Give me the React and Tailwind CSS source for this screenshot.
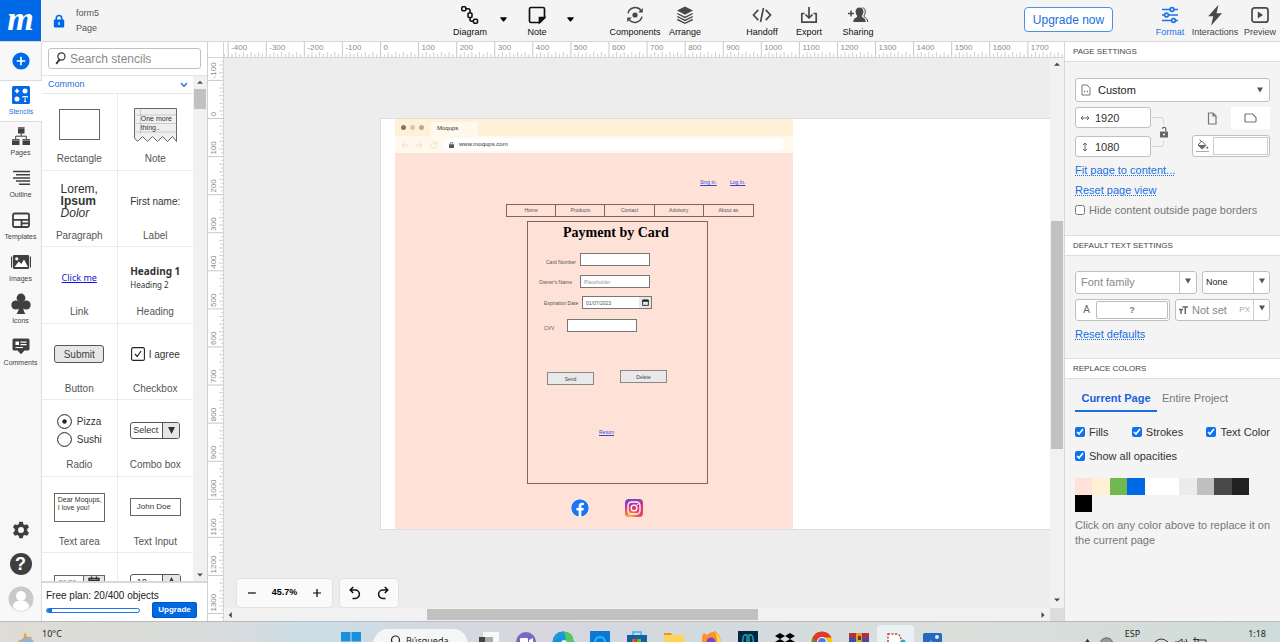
import React, { useLayoutEffect, useRef, useState } from "react";
import { FaFacebook } from "react-icons/fa";

const SCALE = 0.3808;

function range(from, to, step) {
  const out = [];
  for (let v = from; v <= to; v += step) out.push(v);
  return out;
}

/* ---------- rulers ---------- */

function useSize() {
  const ref = useRef(null);
  const [size, setSize] = useState({ width: 0, height: 0 });
  useLayoutEffect(() => {
    const measure = () => {
      const r = ref.current.getBoundingClientRect();
      setSize({ width: r.width, height: r.height });
    };
    measure();
    window.addEventListener("resize", measure);
    return () => window.removeEventListener("resize", measure);
  }, []);
  return [ref, size];
}

function HorizontalRuler() {
  const [ref, { width }] = useSize();
  const x = (v) => 156.5 + v * SCALE;
  const last = Math.floor((width - 156.5) / SCALE);
  return (
    <svg ref={ref} className="block h-full w-full" aria-hidden="true">
      {range(-410, last, 10).map((v) => (
        <line key={v} x1={x(v)} x2={x(v)} y1={v % 100 === 0 ? 0 : v % 20 === 0 ? 10 : 12} y2="16"
          stroke={v % 100 === 0 ? "#c8c8c8" : "#c4c4c4"} strokeWidth={v % 100 === 0 ? 1 : 0.8} />
      ))}
      {range(-400, last - 50, 100).map((v) => (
        <text key={v} x={x(v) + 3} y="8" fontSize="8" fill="#8c8c8c">{v}</text>
      ))}
    </svg>
  );
}

function VerticalRuler() {
  const [ref, { height }] = useSize();
  const y = (v) => 60.5 + v * SCALE;
  const last = Math.floor((height - 60.5) / SCALE);
  return (
    <svg ref={ref} className="block h-full w-full" aria-hidden="true">
      {range(-150, last, 10).map((v) => (
        <line key={v} y1={y(v)} y2={y(v)} x1={v % 100 === 0 ? 0 : v % 20 === 0 ? 11 : 13} x2="16"
          stroke={v % 100 === 0 ? "#c8c8c8" : "#c4c4c4"} strokeWidth={v % 100 === 0 ? 1 : 0.8} />
      ))}
      {range(-100, last, 100).map((v) => (
        <text key={v} transform={`translate(8 ${y(v) - 2}) rotate(-90)`} fontSize="8" fill="#8c8c8c">{v}</text>
      ))}
    </svg>
  );
}

function Arrow({ dir, className = "" }) {
  const d = { up: "M0 5 4 1 8 5z", down: "M0 2 4 6 8 2z", left: "M5 0 1 4 5 8z", right: "M2 0 6 4 2 8z" }[dir];
  return (
    <svg viewBox="0 0 8 8" className={`size-[6px] shrink-0 ${className}`} aria-hidden="true">
      <path d={d} fill="currentColor" />
    </svg>
  );
}

/* ---------- header icons ---------- */

const DiagramIcon = () => (
  <svg viewBox="0 0 20 20" className="size-5" fill="none" stroke="#111" strokeWidth="1.6">
    <rect x="1.8" y="1.800" width="4" height="4" rx="1" />
    <rect x="8" y="8" width="4" height="4.500" rx="1" />
    <rect x="13.500" y="14.200" width="4" height="4" rx="1" />
    <path d="M5.800 3.800h2.400q1.800 0 1.800 1.800V8M10 12.500v2q0 1.700 1.800 1.700h1.700" />
  </svg>
);
const NoteIcon = () => (
  <svg viewBox="0 0 20 20" className="size-5" fill="none" stroke="#111" strokeWidth="1.7">
    <path d="M4 2.500h12q1.500 0 1.500 1.500v9l-4.700 4.500H4q-1.500 0-1.500-1.500V4Q2.500 2.500 4 2.500z" />
    <path d="M12.500 17.500V12.500h5z" fill="#111" />
  </svg>
);
const ComponentsIcon = () => (
  <svg viewBox="0 0 20 20" className="size-5" fill="none" stroke="#484848" strokeWidth="1.5">
    <path d="M3 8.300a7.300 7.300 0 0 1 13-2.700M17 11.700a7.300 7.300 0 0 1-13 2.700" />
    <path d="M17.800 3v4.600h-4.700zM2.200 17v-4.600h4.700z" fill="#484848" stroke="none" />
    <circle cx="10" cy="10" r="2.600" fill="#484848" stroke="none" />
  </svg>
);
const ArrangeIcon = () => (
  <svg viewBox="0 0 20 20" className="size-5" fill="none" stroke="#484848" strokeWidth="1.500">
    <path d="M10 1.500 18 5.500l-8 4.200-8-4.200z" fill="#484848" stroke="none" />
    <path d="m2.300 8.500 7.700 3.900 7.700-3.900M2.300 11.500l7.700 3.900 7.700-3.900M2.300 14.500l7.700 3.800 7.700-3.800" strokeWidth="1.400" />
  </svg>
);
const HandoffIcon = () => (
  <svg viewBox="0 0 20 20" className="size-5" fill="none" stroke="#484848" strokeWidth="1.700">
    <path d="M6.300 4.800 1.500 10l4.800 5.200M13.700 4.800l4.800 5.200-4.800 5.200M11.500 3 8.500 17" />
  </svg>
);
const ExportIcon = () => (
  <svg viewBox="0 0 20 20" className="size-5" fill="none" stroke="#484848" strokeWidth="1.700">
    <path d="M5.500 8.500H2.800v8.700h14.400V8.500H14.500M10 2v10.500M6.500 9.500 10 13l3.500-3.500" strokeLinejoin="round" />
  </svg>
);
const SharingIcon = () => (
  <svg viewBox="0 0 22 20" className="h-5 w-[22px]" fill="#484848">
    <path d="M1 7.800h6v1.500H1zM3.300 5.500h1.500v6H3.300z" />
    <path d="M12.500 2.500c2.500 0 3.900 1.700 3.900 4.200 0 1.800-.7 3-1.500 3.900v1.500c1.500 1 3.600 1.500 3.800 4.900H6.300c.2-3.400 2.300-3.900 3.800-4.900v-1.500c-.8-.9-1.500-2.100-1.500-3.900 0-2.500 1.400-4.200 3.900-4.200z" />
    <path d="M15.500 2.700c2 .3 2.800 2 2.800 4 0 1.600-.5 2.700-1.200 3.600v1.500c1.600 1.200 3.400 1.900 3.700 5.200" fill="none" stroke="#484848" strokeWidth="1" />
  </svg>
);
const FormatIcon = () => (
  <svg viewBox="0 0 20 20" className="size-5" fill="#f4f4f4" stroke="#1a73e8" strokeWidth="1.600">
    <path d="M2 4.500h16M2 10h16M2 15.500h16" />
    <circle cx="12" cy="4.500" r="1.900" /><circle cx="6.500" cy="10" r="1.900" /><circle cx="13.500" cy="15.500" r="1.900" />
  </svg>
);
const BoltIcon = () => (
  <svg viewBox="0 0 20 22" className="h-[22px] w-5" fill="#484848">
    <path d="M13.500 .8 3.200 12.300h5L6.200 21.500 17 9.300h-5.500z" />
  </svg>
);
const PreviewIcon = () => (
  <svg viewBox="0 0 20 20" className="size-5" fill="none" stroke="#484848" strokeWidth="1.700">
    <rect x="2" y="2.800" width="16" height="14.400" rx="2.500" />
    <path d="M7.800 6.500 13 10l-5.200 3.500z" fill="#484848" stroke="none" />
  </svg>
);

function ToolButton({ icon, label, active, muted, wide }) {
  return (
    <button className={`flex h-[41px] shrink-0 flex-col items-center whitespace-nowrap pt-1 text-[9px] leading-[12px] ${wide ? "w-[50px]" : "w-10"} ${active ? "text-[#1a73e8]" : muted ? "text-[#444]" : "text-[#111]"}`}>
      <span className="flex h-[22px] items-center">{icon}</span>
      <span>{label}</span>
    </button>
  );
}

function Caret({ label }) {
  return (
    <button aria-label={label} className="flex h-[38px] w-4 shrink-0 items-center justify-center text-black">
      <svg viewBox="0 0 8 5" className="h-[5px] w-[7px]"><path d="M.5 0h7q.5.500 0 1L4.500 4.700q-.5.400-1 0L.5 1Q0 .5.500 0z" fill="currentColor" /></svg>
    </button>
  );
}

function Header() {
  return (
    <header className="flex h-[42px] shrink-0 border-b border-[#d6d6d6] bg-[#f4f4f4]">
      <div className="flex w-[450px] shrink-0 items-center">
        <a href="#home" aria-label="Moqups" className="flex size-[41px] shrink-0 items-center justify-center bg-[#0069e8] pb-1 font-['Liberation_Serif',serif] text-[34px] leading-[37px] font-bold text-white italic">
          m
        </a>
        <svg viewBox="0 0 12 14" className="ml-3 h-[14px] w-3" aria-hidden="true">
          <path d="M3.300 6V4.200a2.700 2.700 0 0 1 5.400 0V6" fill="none" stroke="#0069e8" strokeWidth="1.600" />
          <rect x=".8" y="5.600" width="10.400" height="7.800" rx="1" fill="#0069e8" />
          <path d="M6 8v3" stroke="#f4f4f4" strokeWidth="1.300" />
        </svg>
        <div className="ml-[11px] text-[9px] leading-[15px] text-[#555]">
          <div>form5</div>
          <div>Page</div>
        </div>
      </div>
      <nav className="flex shrink-0">
        <ToolButton icon={<DiagramIcon />} label="Diagram" />
        <span className="w-[5px]" />
        <Caret label="Diagram options" />
        <span className="w-[6px]" />
        <ToolButton icon={<NoteIcon />} label="Note" />
        <span className="w-[5px]" />
        <Caret label="Note options" />
        <span className="w-8" />
        <ToolButton icon={<ComponentsIcon />} label="Components" wide />
        <span className="w-[5px]" />
        <ToolButton icon={<ArrangeIcon />} label="Arrange" />
        <span className="w-[37px]" />
        <ToolButton icon={<HandoffIcon />} label="Handoff" />
        <span className="w-[7px]" />
        <ToolButton icon={<ExportIcon />} label="Export" />
        <span className="w-[9px]" />
        <ToolButton icon={<SharingIcon />} label="Sharing" />
      </nav>
      <div className="ml-auto flex shrink-0">
        <button className="mt-[7px] mr-[37px] h-[25px] w-[89px] rounded border border-[#4a90e8] bg-white text-xs whitespace-nowrap text-[#1a6fe0]">Upgrade now</button>
        <ToolButton icon={<FormatIcon />} label="Format" active />
        <ToolButton icon={<BoltIcon />} label="Interactions" muted wide />
        <ToolButton icon={<PreviewIcon />} label="Preview" muted />
      </div>
    </header>
  );
}

/* ---------- left rail ---------- */

const rail = [
  ["Stencils", (
    <svg viewBox="0 0 20 20" className="size-5"><rect x="1" y="1" width="18" height="18" rx="1.500" fill="#0069e8" />
      <path d="M6 3.800v4.400M3.800 6h4.400" stroke="#fff" strokeWidth="1.600" /><circle cx="14" cy="6" r="2.500" fill="#fff" /><circle cx="6" cy="14" r="2.500" fill="#fff" />
      <path d="M11.800 12.800v-1.300h4.600v1.300M14.100 11.500v5M13 16.500h2.200" fill="none" stroke="#fff" strokeWidth="1" /></svg>
  )],
  ["Pages", (
    <svg viewBox="0 0 20 20" className="size-5" fill="#3f3f3f"><path d="M7 1h6.500v6.500H7zM1 13h7.500v6H1zM11.500 13H19v6h-7.500z" /><path d="M10.200 7v3M4.700 13v-2.800h10.600V13" fill="none" stroke="#3f3f3f" strokeWidth="1" /><path d="M7 2h6.500M1 14.200h7.500M11.500 14.200H19" stroke="#fff" strokeWidth=".500" /></svg>
  )],
  ["Outline", (
    <svg viewBox="0 0 20 20" className="size-5" stroke="#3f3f3f" strokeWidth="1.500"><path d="M2 3.500h17M5 6.700h14M2 9.900h17M5 13.100h14M8 16.300h11" /></svg>
  )],
  ["Templates", (
    <svg viewBox="0 0 20 20" className="size-5" fill="none" stroke="#3f3f3f" strokeWidth="1.800"><rect x="2" y="3.500" width="16" height="13.500" rx="1.500" /><path d="M2 9.800h16M10.500 10v7M10.500 13.400H18" /></svg>
  )],
  ["Images", (
    <svg viewBox="0 0 22 20" className="h-5 w-[22px]" fill="#3f3f3f"><path d="M4 3h14q1 0 1 1v12q0 1-1 1H4q-1 0-1-1V4q0-1 1-1zM1 4.500h1.200v11H1zM19.800 4.500H21v11h-1.200z" /><path d="m4.500 15 4.300-5.500 2.500 2.500L14 7.500l4 7.500z" fill="#fff" /><circle cx="6.800" cy="6.800" r="1.600" fill="#fff" /></svg>
  )],
  ["Icons", (
    <svg viewBox="0 0 20 22" className="h-[22px] w-5" fill="#3f3f3f"><circle cx="10" cy="5" r="4.400" /><circle cx="4.800" cy="12" r="4.500" /><circle cx="15.200" cy="12" r="4.500" /><path d="M8 7h4v6c.3 4 1 6 2.500 8h-9C7 19 7.700 17 8 13z" /></svg>
  )],
  ["Comments", (
    <svg viewBox="0 0 20 20" className="size-5" fill="#3f3f3f"><path d="M3 2.500h14q1.500 0 1.500 1.500v9q0 1.500-1.500 1.500h-3.500L10 18.200l-3.500-3.700H3Q1.500 14.500 1.500 13V4Q1.500 2.500 3 2.500z" /><path d="M4.500 5.500h3.500V9H4.500z" fill="#fff" /><path d="M9.500 6.200h6M9.500 8.600h6M4.500 11.500H12" stroke="#fff" strokeWidth="1.200" /></svg>
  )],
];

function Rail() {
  return (
    <nav className="flex w-[42px] shrink-0 flex-col border-r border-[#dcdcdc] bg-[#f8f8f8]">
      <button aria-label="Add" className="flex h-[38px] shrink-0 items-center justify-center">
        <svg viewBox="0 0 18 18" className="size-[18px]"><circle cx="9" cy="9" r="8.600" fill="#0069e8" /><path d="M9 4.700v8.600M4.700 9h8.600" stroke="#fff" strokeWidth="1.600" /></svg>
      </button>
      {rail.map(([label, icon]) => (
        <button key={label} className={`flex h-[42px] shrink-0 flex-col items-center pt-[3px] text-[7px] leading-[10px] ${label === "Stencils" ? "-mr-px border-y border-[#dcdcdc] bg-white text-[#1a6fe0]" : "text-[#444]"}`}>
          <span className="flex h-[22px] items-center">{icon}</span>
          <span className="mt-px">{label}</span>
        </button>
      ))}
      <div className="mt-auto flex flex-col items-center">
        <button aria-label="Settings" className="flex h-[34px] items-center">
          <svg viewBox="0 0 20 20" className="size-[18px]" fill="#3f3f3f"><path fillRule="evenodd" d="M8 .8h4l.6 2.700 1.700 1 2.600-.9 2 3.400-2 1.900v2.200l2 1.900-2 3.400-2.600-.9-1.700 1-.6 2.700H8l-.6-2.700-1.700-1-2.600.9-2-3.400 2-1.900V8.900l-2-1.900 2-3.400 2.600.9 1.700-1zM10 6.700a3.300 3.300 0 1 0 0 6.600 3.300 3.300 0 0 0 0-6.600z" /></svg>
        </button>
        <button aria-label="Help" className="flex h-[34px] items-center">
          <span className="flex size-[22px] items-center justify-center rounded-full bg-[#3f3f3f] text-lg leading-[22px] font-bold text-white">?</span>
        </button>
        <button aria-label="Account" className="flex h-10 items-start pt-[5px]">
          <svg viewBox="0 0 26 26" className="size-[26px]"><circle cx="13" cy="13" r="12.500" fill="#c9c9c9" /><circle cx="13" cy="10" r="5" fill="#fff" /><path d="M4.500 20.500c1-4 4-6 8.500-6s7.500 2 8.500 6q-3.500 4.500-8.500 4.500t-8.500-4.500z" fill="#fff" /></svg>
        </button>
      </div>
    </nav>
  );
}

/* ---------- stencils ---------- */

const previews = [
  ["Rectangle", <div className="h-[31px] w-[41px] border border-[#666]" />],
  ["Note", (
    <div className="relative h-[34px] w-[43px]">
      <svg viewBox="0 0 43 34" className="h-full w-full" fill="#efefef" stroke="#666" strokeWidth="1"><path d="M.5.500h42v33l-4-5-5 5-5-5-5 5-5-5-5 5-5-5-5 5-3-3.500z" /><path d="M.5 7h42M.5 15.500h42M.5 24h42M6.500.500V26" stroke="#bbb" strokeWidth=".700" /></svg>
      <div className="absolute top-[6px] left-[7px] text-[7px] leading-[9px] whitespace-nowrap text-[#333]">One more<br />thing..</div>
    </div>
  )],
  ["Paragraph", <div className="text-[12px] leading-[12px] text-[#333]">Lorem,<br /><b>Ipsum</b><br /><i>Dolor</i></div>],
  ["Label", <div className="text-[10px] text-[#333]">First name:</div>],
  ["Link", <a href="#link" className="font-['Noto_Sans',sans-serif] text-[9px] text-[#1414d8] underline">Click me</a>],
  ["Heading", <div className="font-['Noto_Sans',sans-serif] text-[#333]"><div className="text-[10px] leading-[14px] font-bold">Heading 1</div><div className="text-[8px] leading-[14px]">Heading 2</div></div>],
  ["Button", <div className="flex h-[18px] w-[50px] items-center justify-center rounded-[3px] border border-[#555] bg-[#e6e6e6] text-[10px] text-[#444]">Submit</div>],
  ["Checkbox", (
    <div className="flex items-center gap-1 text-[10px] text-[#333]">
      <svg viewBox="0 0 14 14" className="size-[14px]" fill="none" stroke="#222"><rect x=".6" y=".6" width="12.800" height="12.800" rx="1.500" strokeWidth="1.100" /><path d="m4 7 2.200 2.500L10 4" strokeWidth="1.200" /></svg>I agree
    </div>
  )],
  ["Radio", (
    <div className="flex flex-col gap-[3px] text-[10px] leading-[15px] text-[#333]">
      <div className="flex items-center gap-[5px]"><svg viewBox="0 0 15 15" className="size-[15px]"><circle cx="7.500" cy="7.500" r="6.900" fill="none" stroke="#222" /><circle cx="7.500" cy="7.500" r="2.200" fill="#222" /></svg>Pizza</div>
      <div className="flex items-center gap-[5px]"><svg viewBox="0 0 15 15" className="size-[15px]"><circle cx="7.500" cy="7.500" r="6.900" fill="none" stroke="#222" /></svg>Sushi</div>
    </div>
  )],
  ["Combo box", (
    <div className="flex h-[17px] w-[50px] rounded-[3px] border border-[#555] text-[9px] leading-[15px] text-[#333]">
      <span className="w-[31px] pl-0.5">Select</span>
      <span className="flex flex-1 items-center justify-center rounded-r-[2px] border-l border-[#555] bg-[#e6e6e6]"><svg viewBox="0 0 7 7" className="size-[7px]"><path d="M0 0h7L3.500 7z" fill="#333" /></svg></span>
    </div>
  )],
  ["Text area", <div className="h-[29px] w-[51px] border border-[#666] pt-0.5 pl-[3px] text-[7px] leading-[8px] whitespace-nowrap text-[#333]">Dear Moqups,<br />I love you!</div>],
  ["Text Input", <div className="h-[18px] w-[51px] border border-[#666] pl-[6px] text-[8px] leading-[16px] text-[#333]">John Doe</div>],
  ["Date", (
    <div className="flex h-[18px] w-[51px] border border-[#666] text-[7px] leading-[14px] text-[#666]">
      <span className="w-7 pl-1">01/09</span>
      <span className="flex flex-1 items-start justify-center border-l border-[#666] bg-[#e6e6e6]"><svg viewBox="0 0 12 12" className="size-3" fill="none" stroke="#333"><path d="M1 2.500h10v9H1zM3.500.500v3M8.500.500v3M1 4.500h10" strokeWidth="1.500" /></svg></span>
    </div>
  )],
  ["Stepper", (
    <div className="flex h-[20px] w-[51px] rounded-[3px] border border-[#555] text-[9px] leading-[15px] text-[#333]">
      <span className="w-[31px] pl-[6px]">10</span>
      <span className="flex flex-1 justify-center border-l border-[#555] bg-[#e6e6e6] pt-0.5"><svg viewBox="0 0 6 6" className="size-[5px]"><path d="M0 6h6L3 0z" fill="#333" /></svg></span>
    </div>
  )],
];

function Stencils() {
  return (
    <aside className="flex w-[166px] shrink-0 flex-col border-r border-[#d0d0d0] bg-white">
      <div className="shrink-0 px-[6px] pt-[6px] pb-[6px]">
        <label className="flex h-[21px] items-center rounded-[3px] border border-[#c0c0c0] pl-[6px]">
          <svg viewBox="0 0 12 14" className="h-[13px] w-[11px] shrink-0" fill="none" stroke="#333"><circle cx="7" cy="4.800" r="3.900" strokeWidth="1.300" /><path d="M5 8.300 1.300 12.800" strokeWidth="2" /></svg>
          <input type="text" aria-label="Search stencils" placeholder="Search stencils" className="ml-1 h-full w-full min-w-0 bg-transparent text-xs outline-none placeholder:text-[#8a8a8a]" />
        </label>
      </div>
      <div className="flex min-h-0 flex-1 border-t border-[#e4e4e4]">
        <div className="min-w-0 flex-1 overflow-hidden">
          <button className="flex h-[18px] w-full items-center justify-between border-b border-[#e8e8e8] pr-[5px] pl-[6px] text-[9px] text-[#1a6fe0]">
            Common
            <svg viewBox="0 0 8 6" className="h-[6px] w-2" fill="none" stroke="currentColor" strokeWidth="1.300"><path d="m1 1 3 3.200L7 1" /></svg>
          </button>
          <div className="grid h-[536px] grid-cols-2 grid-rows-7">
            {previews.map(([label, node], i) => (
              <figure key={label} className={`flex min-h-0 flex-col items-center border-b border-[#ebebeb] ${i % 2 === 0 ? "border-r" : ""}`}>
                <div className="flex h-[61px] w-full shrink-0 items-center justify-center">{node}</div>
                <figcaption className="-mt-[2px] text-[10px] leading-[12px] text-[#555]">{label}</figcaption>
              </figure>
            ))}
          </div>
        </div>
        <div className="flex w-[14px] shrink-0 flex-col items-center bg-[#f1f1f1] py-1 text-[#555]">
          <Arrow dir="up" />
          <div className="mt-[3px] h-5 w-3 bg-[#c1c1c1]" />
          <Arrow dir="down" className="mt-auto -mb-px" />
        </div>
      </div>
      <div className="h-10 shrink-0 border-t-2 border-[#d8d8d8] px-1 pt-[6px]">
        <div className="text-[10px] leading-[13px] text-[#222]">Free plan: 20/400 objects</div>
        <div className="flex items-center justify-between pr-[6px]">
          <div className="h-[5px] w-[94px] overflow-hidden rounded-full border border-[#1a73e8]"><div className="h-full w-[5%] bg-[#1a73e8]" /></div>
          <button className="h-4 w-[45px] rounded-[2px] border border-[#0058c8] bg-[#0069e0] text-[8px] leading-[12px] font-bold text-white">Upgrade</button>
        </div>
      </div>
    </aside>
  );
}

/* ---------- canvas: items are placed freely on the page ---------- */

function Mockup() {
  const label = "absolute text-[5px] leading-[8px] whitespace-nowrap text-[#555]";
  const field = "absolute h-[13px] w-[70px] border border-[#777] bg-white px-[3px] text-[5px] leading-[8px] text-[#555] placeholder:text-[#999]";
  const link = "absolute text-[5px] leading-[8px] whitespace-nowrap text-[#3344dd] underline";
  return (
    <div className="absolute top-[60px] left-[156px] h-[412px] w-[731px] border border-[#dedede] bg-white">
      <div className="absolute top-0 left-[14px] h-[410px] w-[398px] bg-[#fee2d8]">
        <div className="flex h-[17px] items-center bg-[#fff0d8]">
          <div className="flex w-[35px] shrink-0 gap-1 pl-[6px]">
            <span className="size-[5px] rounded-full bg-[#857560]" />
            <span className="size-[5px] rounded-full bg-[#d8c8b0]" />
            <span className="size-[5px] rounded-full bg-[#b8aa95]" />
          </div>
          <div className="mt-[3px] h-[14px] w-12 rounded-t-[2px] bg-[#fff8ec] pl-[7px] text-[6px] leading-[13px] text-[#333]">Moqups</div>
        </div>
        <div className="flex h-[17px] items-center bg-[#fff8ec] pr-2 pl-[6px]">
          <svg viewBox="0 0 38 8" className="h-2 w-[38px]" fill="none" stroke="#f6dcc8" strokeWidth="1"><path d="M7 4H1m2.500-2.500L1 4l2.500 2.500M15 4h6m-2.500-2.500L21 4l-2.500 2.500M35.500 3a3 3 0 1 0 .3 2M36 .8V3h-2.200" /></svg>
          <div className="ml-1 flex h-[13px] flex-1 items-center gap-[5px] rounded-full bg-white pl-[6px] text-[6px] text-[#333]">
            <svg viewBox="0 0 5 6" className="h-[6px] w-[5px]"><rect y="2.300" width="5" height="3.700" fill="#555" /><path d="M1.200 2.500V1.600a1.300 1.300 0 0 1 2.600 0v.9" fill="none" stroke="#555" strokeWidth=".800" /></svg>
            www.moqups.com
          </div>
        </div>
        <a href="#signin" className={`${link} top-[59px] left-[305px]`}>Sing in.</a>
        <a href="#login" className={`${link} top-[59px] left-[335px]`}>Log In.</a>
        <nav className="absolute top-[85px] left-[111px] grid h-[13px] w-[248px] grid-cols-5 divide-x divide-[#80655c] border border-[#80655c] text-center text-[5px] leading-[11px] text-[#555]">
          {["Home", "Products", "Contact", "Advisory", "About as"].map((t) => <a key={t} href="#nav">{t}</a>)}
        </nav>
        <div className="absolute top-[102px] left-[132px] h-[263px] w-[181px] border border-[#80655c]" />
        <h1 className="absolute top-[105px] left-[168px] font-['Liberation_Serif',serif] text-[14px] leading-[18px] font-bold whitespace-nowrap text-black">Payment by Card</h1>
        <label htmlFor="card" className={`${label} top-[139px] left-[151px]`}>Card Number</label>
        <input id="card" className={`${field} top-[134px] left-[185px]`} />
        <label htmlFor="owner" className={`${label} top-[159px] left-[144px]`}>Owner's Name</label>
        <input id="owner" placeholder="Placeholder" className={`${field} top-[156px] left-[185px]`} />
        <label htmlFor="expiry" className={`${label} top-[180px] left-[149px]`}>Expiration Date</label>
        <input id="expiry" defaultValue="01/07/2023" className={`${field} top-[177px] left-[187px]`} />
        <div className="absolute top-[178px] left-[244px] flex h-[11px] w-3 items-center justify-center bg-[#e8e8e8]">
          <svg viewBox="0 0 8 8" className="size-[7px]"><path d="M.7 1.300h6.600v6H.7z" fill="none" stroke="#222" strokeWidth="1" /><path d="M.5 1h7v2h-7zM2 0h1v1H2zM5 0h1v1H5z" fill="#222" /></svg>
        </div>
        <label htmlFor="cvv" className={`${label} top-[205px] left-[149px]`}>CVV</label>
        <input id="cvv" className={`${field} top-[200px] left-[172px]`} />
        <button className="absolute top-[253px] left-[152px] h-[13px] w-[47px] border border-[#888] bg-[#e9e9e9] text-[5px] leading-[8px] text-[#444]">Send</button>
        <button className="absolute top-[251px] left-[225px] h-[13px] w-[47px] border border-[#888] bg-[#e9e9e9] text-[5px] leading-[8px] text-[#444]">Delete</button>
        <a href="#return" className={`${link} top-[309px] left-[204px]`}>Return</a>
        <FaFacebook className="absolute top-[380px] left-[176px] size-[18px] rounded-full bg-white text-[#1877f2]" />
        <svg viewBox="0 0 18 18" className="absolute top-[380px] left-[230px] size-[18px]">
          <defs>
            <linearGradient id="ig" x1="0" y1="0" x2=".3" y2="1"><stop offset="0" stopColor="#5b4fd0" /><stop offset=".45" stopColor="#c9309a" /><stop offset="1" stopColor="#e8405a" /></linearGradient>
            <radialGradient id="ig2" cx=".25" cy="1.050" r=".750"><stop offset="0" stopColor="#ffd060" /><stop offset=".4" stopColor="#fb8040" stopOpacity=".9" /><stop offset="1" stopColor="#e8405a" stopOpacity="0" /></radialGradient>
          </defs>
          <rect width="18" height="18" rx="4" fill="url(#ig)" /><rect width="18" height="18" rx="4" fill="url(#ig2)" />
          <rect x="3" y="3" width="12" height="12" rx="3.500" fill="none" stroke="#fff" strokeWidth="1.300" /><circle cx="9" cy="9" r="2.900" fill="none" stroke="#fff" strokeWidth="1.300" /><circle cx="12.500" cy="5.500" r=".8" fill="#fff" />
        </svg>
      </div>
    </div>
  );
}

function Workspace() {
  return (
    <main className="flex min-w-0 flex-1 flex-col bg-[#ededed]">
      <div className="flex h-4 shrink-0 border-b border-[#d4d4d4] bg-white">
        <div className="w-4 shrink-0 border-r border-[#d4d4d4]" />
        <div className="min-w-0 flex-1 overflow-hidden"><HorizontalRuler /></div>
      </div>
      <div className="flex min-h-0 flex-1">
        <div className="w-4 shrink-0 overflow-hidden border-r border-[#d4d4d4] bg-white"><VerticalRuler /></div>
        <div className="flex min-w-0 flex-1 flex-col">
          <div className="flex min-h-0 flex-1">
            <div className="relative min-w-0 flex-1 overflow-hidden">
              <Mockup />
              <div className="absolute bottom-0 left-3 flex gap-[6px] text-black">
                <div className="flex h-[30px] w-[97px] items-center justify-between rounded border border-[#e2e2e2] bg-[#fafafa] px-[11px] text-[9px] font-bold">
                  <button aria-label="Zoom out"><svg viewBox="0 0 8 8" className="size-2"><path d="M0 4h8" stroke="#000" strokeWidth="1.200" /></svg></button>
                  <span>45.7%</span>
                  <button aria-label="Zoom in"><svg viewBox="0 0 8 8" className="size-2"><path d="M0 4h8M4 0v8" stroke="#000" strokeWidth="1.200" /></svg></button>
                </div>
                <div className="flex h-[30px] w-[60px] items-center justify-between rounded border border-[#e2e2e2] bg-[#fafafa] px-2">
                  <button aria-label="Undo"><svg viewBox="0 0 13 14" className="h-[14px] w-[13px]" fill="none" stroke="#111" strokeWidth="1.500"><path d="M3 4h4.200a4.200 4.200 0 0 1 0 8.400H4.500M5.200 1 2.200 4l3 3" /></svg></button>
                  <button aria-label="Redo"><svg viewBox="0 0 13 14" className="h-[14px] w-[13px]" fill="none" stroke="#111" strokeWidth="1.500"><path d="M10 4H5.800a4.200 4.200 0 0 0 0 8.400h2.700M7.800 1l3 3-3 3" /></svg></button>
                </div>
              </div>
            </div>
            <div className="flex w-[14px] shrink-0 flex-col items-center bg-[#f1f1f1] pt-1 pb-[5px] text-[#444]">
              <Arrow dir="up" />
              <div className="grow-[29] basis-0" />
              <div className="w-3 grow-[43] basis-0 bg-[#c1c1c1]" />
              <div className="grow-[28] basis-0" />
              <Arrow dir="down" />
            </div>
          </div>
          <div className="flex h-[13px] shrink-0">
            <div className="flex flex-1 items-center bg-[#f1f1f1] px-[4px] text-[#444]">
              <Arrow dir="left" />
              <div className="grow-[24] basis-0" />
              <div className="h-[11px] grow-[41] basis-0 bg-[#c1c1c1]" />
              <div className="grow-[35] basis-0" />
              <Arrow dir="right" />
            </div>
            <div className="w-[14px] bg-[#dcdcdc]" />
          </div>
        </div>
      </div>
    </main>
  );
}

/* ---------- format panel ---------- */

const box = "rounded-[3px] border border-[#c0c0c0] bg-white";

function SectionTitle({ children }) {
  return <h2 className="flex h-[21px] shrink-0 items-center border-y border-[#dedede] bg-white pl-2 text-[8px] leading-[12px] text-[#444]">{children}</h2>;
}

function Tick({ label, className = "" }) {
  return (
    <label className={`flex items-center gap-1 text-[11px] leading-4 text-[#333] ${className}`}>
      <input type="checkbox" defaultChecked className="size-[10px] accent-[#0b72f0]" />{label}
    </label>
  );
}

function Down() {
  return <svg viewBox="0 0 6 6" className="size-[6px] shrink-0" aria-hidden="true"><path d="M0 .5h6L3 5.500z" fill="#555" /></svg>;
}

const swatches = ["bg-[#ffe2d9]", "bg-[#fff0d6]", "bg-[#70b850]", "bg-[#0069e8]", "bg-white", "bg-white", "bg-[#ebebeb]", "bg-[#c0c0c0]", "bg-[#484848]", "bg-[#222]", "bg-black"];

function FormatPanel() {
  const bare = "h-full w-0 min-w-0 flex-1 appearance-none bg-transparent outline-none";
  const dotted = "block w-fit text-[11px] leading-5 text-[#1a6fe0] underline decoration-dotted underline-offset-1";
  return (
    <aside className="flex w-[216px] shrink-0 flex-col overflow-hidden border-l border-[#d8d8d8] bg-[#f4f4f4]">
      <div className="-mt-px"><SectionTitle>PAGE SETTINGS</SectionTitle></div>
      <div className="h-[173px] shrink-0 px-[10px] pt-4">
        <div className={`flex h-6 items-center pr-[6px] pl-[5px] ${box}`}>
          <svg viewBox="0 0 10 12" className="h-3 w-[10px] shrink-0" fill="none" stroke="#777"><path d="M1 1h5l3 3v7H1z" strokeWidth="1" /><path d="M3 7.500h1.200M5.800 7.500H7" strokeWidth="1.300" /></svg>
          <select aria-label="Page size" className={`${bare} ml-[7px] text-[11px] text-[#222]`}><option>Custom</option></select>
          <Down />
        </div>
        <div className="mt-[5px] flex justify-between">
          <div className="flex">
            <div className="flex w-[76px] flex-col gap-2">
              <label className={`flex h-[21px] items-center pl-1 ${box}`}>
                <svg viewBox="0 0 10 8" className="h-2 w-[10px] shrink-0" fill="none" stroke="#666" strokeWidth="1"><path d="M1 4h8M3 2 1 4l2 2M7 2l2 2-2 2" /></svg>
                <input aria-label="Width" defaultValue="1920" className={`${bare} ml-[5px] text-[11px] text-[#333]`} />
              </label>
              <label className={`flex h-[21px] items-center pl-1 ${box}`}>
                <svg viewBox="0 0 10 10" className="size-[10px] shrink-0" fill="none" stroke="#666" strokeWidth="1"><path d="M5 1v8M3 3l2-2 2 2M3 7l2 2 2-2" /></svg>
                <input aria-label="Height" defaultValue="1080" className={`${bare} ml-[5px] text-[11px] text-[#333]`} />
              </label>
            </div>
            <svg viewBox="0 0 18 50" className="h-[50px] w-[18px]" fill="none" stroke="#d4d4d4"><path d="M1 10.500h8.500q3 0 3 3V17M1 39.500h8.500q3 0 3-3V34" /><rect x="9" y="24.500" width="8" height="6" rx=".5" fill="#666" stroke="none" /><path d="M14.800 24.500v-2.300a1.700 1.700 0 0 0-3.400-.3" stroke="#666" strokeWidth="1.200" /><circle cx="13" cy="27.500" r="1" fill="#fff" stroke="none" /></svg>
          </div>
          <div className="flex w-[78px] flex-col gap-[6px]">
            <div className="flex h-[22px]">
              <button aria-label="Portrait" className="flex flex-1 items-center justify-center"><svg viewBox="0 0 10 13" className="h-[13px] w-[10px]" fill="none" stroke="#777" strokeWidth="1.200"><path d="M1.500 1h4.500l3 3v8h-7.500zM6 1v3h3" /></svg></button>
              <button aria-label="Landscape" className="flex flex-1 items-center justify-center bg-white"><svg viewBox="0 0 13 10" className="h-[10px] w-[13px]" fill="none" stroke="#777" strokeWidth="1.200"><path d="M2 1h6.500l3.500 3.500V8q0 1-1 1H2Q1 9 1 8V2q0-1 1-1z" /></svg></button>
            </div>
            <div className={`flex h-[22px] items-center gap-1 p-px pl-[3px] ${box}`}>
              <svg viewBox="0 0 13 14" className="h-[14px] w-[13px] shrink-0" fill="none" stroke="#666"><path d="m5.500 2 4.500 4.500-4 3.500-4-4zM3.500.500 6 3" /><path d="M3 6.500h6l-3 3z" fill="#666" /><circle cx="11.300" cy="8.700" r="1" fill="#666" stroke="none" /><path d="M0 12.500h13" stroke="#aaa" /></svg>
              <button aria-label="Page background" className="h-[18px] flex-1 border border-[#ccc] bg-white" />
            </div>
          </div>
        </div>
        <div className="mt-[3px]">
          <a href="#fit" className={dotted}>Fit page to content...</a>
          <a href="#reset" className={dotted}>Reset page view</a>
          <label className="flex items-center gap-1 text-[11px] leading-5 whitespace-nowrap text-[#777]">
            <input type="checkbox" className="size-[10px]" />Hide content outside page borders
          </label>
        </div>
      </div>
      <SectionTitle>DEFAULT TEXT SETTINGS</SectionTitle>
      <div className="h-[102px] shrink-0 px-[10px] pt-[15px]">
        <div className="flex gap-[5px]">
          <div className={`flex h-[23px] w-[122px] shrink-0 items-center pl-[5px] ${box}`}>
            <select aria-label="Font family" className={`${bare} text-[11px] text-[#888]`}><option>Font family</option></select>
            <span className="flex h-full w-[17px] items-start justify-center border-l border-[#ccc] pt-[6px]"><Down /></span>
          </div>
          <div className={`flex h-[23px] min-w-0 flex-1 items-center pl-[3px] ${box}`}>
            <select aria-label="Font style" className={`${bare} text-[9px] text-[#222]`}><option>None</option></select>
            <span className="flex h-full w-4 items-start justify-center border-l border-[#ccc] pt-[6px]"><Down /></span>
          </div>
        </div>
        <div className="mt-[5px] flex gap-[5px]">
          <div className={`flex h-[22px] w-[95px] shrink-0 items-center p-px ${box}`}>
            <span className="w-[19px] shrink-0 text-center text-[10px] leading-[14px] text-[#666]">A</span>
            <button aria-label="Text color" className="h-[18px] flex-1 rounded-[2px] border border-[#bbb] text-[9px] leading-[12px] font-bold text-[#777]">?</button>
          </div>
          <div className={`flex h-[22px] min-w-0 flex-1 items-center pl-[3px] ${box}`}>
            <svg viewBox="0 0 9 8" className="h-2 w-[9px] shrink-0" fill="none" stroke="#666" strokeWidth="1.500"><path d="M3.500 1H9M6.300 1v7M0 3.500h4M2 3.500V8" /></svg>
            <input aria-label="Font size" placeholder="Not set" className={`${bare} ml-1 text-[11px] placeholder:text-[#888]`} />
            <span className="mr-[3px] text-[8px] leading-[12px] text-[#aaa]">PX</span>
            <span className="flex h-full w-4 shrink-0 items-start justify-center border-l border-[#ccc] pt-[5px]"><Down /></span>
          </div>
        </div>
        <a href="#defaults" className={`mt-[3px] ${dotted}`}>Reset defaults</a>
      </div>
      <SectionTitle>REPLACE COLORS</SectionTitle>
      <div className="px-[10px] pt-[7px] text-[11px]">
        <div className="flex">
          <button className="h-[26px] w-[82px] border-b-2 border-[#1a6fe0] font-bold whitespace-nowrap text-[#1a5fe0]">Current Page</button>
          <button className="ml-[5px] h-[26px] border-b-2 border-transparent whitespace-nowrap text-[#777]">Entire Project</button>
        </div>
        <div className="mt-3 flex justify-between">
          <Tick label="Fills" /><Tick label="Strokes" /><Tick label="Text Color" />
        </div>
        <Tick label="Show all opacities" className="mt-2" />
        <div className="mt-[14px] grid w-[174px] grid-cols-10">
          {swatches.map((c, i) => <button key={i} aria-label={`Color ${i + 1}`} className={`h-[17px] ${c}`} />)}
        </div>
        <p className="-mr-2 mt-[6px] leading-[15px] text-[#777]">Click on any color above to replace it on the current page</p>
      </div>
    </aside>
  );
}

/* ---------- taskbar ---------- */

const apps = [
  <svg viewBox="0 0 22 22" key="tv"><path d="M5 1h16v13H5z" fill="#f8f8f8" /><path d="M1 6h14v12H1z" fill="#444" /><path d="M7 6h8v10H7z" fill="#aaa" /></svg>,
  <svg viewBox="0 0 22 22" key="chat"><circle cx="11" cy="11" r="10" fill="#7b68c0" /><rect x="5" y="7" width="8" height="8" rx="1" fill="#fff" /><path d="m14 9 4-2v8l-4-2z" fill="#fff" /></svg>,
  <svg viewBox="0 0 22 22" key="edge"><circle cx="11" cy="11" r="10.500" fill="#1490d8" /><path d="M11 .5q10 0 10.500 10-3 4-8 2 0-5-4-5-5 0-8 4Q1.500 1 11 .5z" fill="#1a9ad8" /><path d="M12 .6q9.500 1 9.500 10-3 4-8 2 1-6-1.500-12z" fill="#50cc60" /><circle cx="12" cy="12" r="3" fill="#e8f4fc" /></svg>,
  <svg viewBox="0 0 22 22" key="cortana"><path d="M1 0h20v22H1z" fill="#0a78d4" /><circle cx="11" cy="11" r="5" fill="none" stroke="#20c0f8" strokeWidth="2" /></svg>,
  <svg viewBox="0 0 22 22" key="store"><path d="M7 4V1h8v3" fill="none" stroke="#30b8f0" strokeWidth="1.500" /><path d="M1 4h20v16H1z" fill="#145ea8" /><path d="M6 8h4v4H6z" fill="#f25022" /><path d="M11 8h4v4h-4z" fill="#7fba00" /></svg>,
  <svg viewBox="0 0 22 22" key="folder"><path d="M1 2h7l2 2h11v16H1z" fill="#ffd25a" /><path d="M1 2h7l1 2H1z" fill="#d89a20" /></svg>,
  <svg viewBox="0 0 22 22" key="ff"><path d="M2 5 4 2l3 2q3-3 6-3l2-1q6 5 6 11a9.500 9.500 0 0 1-19 0z" fill="#ff9030" /><path d="M15 1q6 5 6 11l-4 2q1-7-2-13z" fill="#ffdc40" /><circle cx="11" cy="11" r="4.500" fill="#8040d0" /></svg>,
  <svg viewBox="0 0 22 22" key="brain"><path d="M1 0h20v22H1z" fill="#082440" /><path d="M10 4Q6 3 6 8q-2 3 4 6zM12 4q4-1 4 4 2 3-4 6z" fill="none" stroke="#10a0a8" strokeWidth="1.600" /></svg>,
  <svg viewBox="0 0 22 22" key="db"><path d="m6 2 5 3-5 3-5-3zM16 2l5 3-5 3-5-3zM6 8l5 3-5 3-5-3zM16 8l5 3-5 3-5-3z" fill="#000" /></svg>,
  <svg viewBox="0 0 22 22" key="chrome"><circle cx="11" cy="11" r="10.500" fill="#fbc116" /><path d="M1.500 6.500a10.500 10.500 0 0 1 19 0H11L6 14z" fill="#e03a2e" /><path d="M1.500 6.500 8 17l-1 3.500Q-2 15 1.500 6.500z" fill="#30a050" /><circle cx="11" cy="11" r="5" fill="#fff" /><circle cx="11" cy="11" r="3.900" fill="#4080ee" /></svg>,
  <svg viewBox="0 0 22 22" key="rar"><path d="M1 2h20v5H1z" fill="#b03040" /><path d="M1 7h20v6H1z" fill="#4050a0" /><path d="M8 2h6v12H8z" fill="#d8a030" /><path d="M10 5h3v4h-3z" fill="#703818" /></svg>,
  <svg viewBox="0 0 22 22" key="snip"><path d="M3 3h8q5 0 5 7v8H3z" fill="#fff" stroke="#c04030" strokeWidth="1.500" strokeDasharray="2 1.500" /><circle cx="18" cy="11" r="2.500" fill="#30a0e8" /></svg>,
  <svg viewBox="0 0 22 22" key="photos"><rect x="1" y="2" width="19" height="18" rx="1.500" fill="#2868c0" /><circle cx="15" cy="6" r="2" fill="#d8ecff" /><path d="M2 19 9 9l8 10z" fill="#60b8f8" /></svg>,
];

function Taskbar() {
  return (
    <footer className="h-[21px] shrink-0 overflow-hidden border-t border-[#b8bcc0] bg-[linear-gradient(90deg,#dedcd4_0%,#d8dcdc_17%,#cddde6_24%,#d8d6de_42%,#d2dade_55%,#dadfdc_75%,#cfdbd8_100%)] font-['Noto_Sans',sans-serif] text-[9px] text-[#222]">
      <div className="flex h-11 items-start">
        <div className="flex w-[341px] shrink-0 items-start pt-[6px] pl-4">
          <svg viewBox="0 0 20 20" className="mt-[2px] size-5" aria-hidden="true"><path d="m9 2 2 5 5 0-3 4 1 5-8-1-4-4 5-2z" fill="#f0a030" /><ellipse cx="11" cy="13" rx="7" ry="5" fill="#88b4e8" /></svg>
          <span className="ml-[6px] leading-[12px]">10°C</span>
        </div>
        <svg viewBox="0 0 20 20" className="mt-[10px] size-5 shrink-0" aria-hidden="true"><path d="M0 0h9.500v9.500H0zM10.500 0H20v9.500h-9.500zM0 10.500h9.500V20H0zM10.500 10.500H20V20h-9.500z" fill="#1890e0" /></svg>
        <button className="mt-[7px] ml-3 flex h-[30px] w-[95px] shrink-0 items-start rounded-full bg-[#f4f6f8] pt-[6px] pl-4">
          <svg viewBox="0 0 12 12" className="size-3" fill="none" stroke="#222" strokeWidth="1.200"><circle cx="6.500" cy="5" r="4" /><path d="M3.500 8 1 11" /></svg>
          <span className="ml-[5px] leading-[12px]">Búsqueda</span>
        </button>
        <div className="ml-[2px] flex">
          {apps.map((icon) => (
            <button key={icon.key} aria-label={icon.key} className={`mt-[3px] flex h-10 w-[37px] shrink-0 items-start justify-center pt-[6px] [&>svg]:size-[22px] ${icon.key === "snip" ? "rounded bg-[#eaf0f3]" : ""}`}>{icon}</button>
          ))}
        </div>
        <div className="ml-auto flex shrink-0 items-start pt-[6px] pr-[14px]">
          <svg viewBox="0 0 34 14" className="mt-[9px] h-[14px] w-[34px]" aria-hidden="true"><path d="M2 8 5.500 3 9 8" fill="none" stroke="#333" strokeWidth="1.300" /><path d="M18 6q1-4 5-5 6-1 8 5v3H18z" fill="#999" stroke="#666" /></svg>
          <span className="ml-[9px] leading-[12px]">ESP</span>
          <svg viewBox="0 0 56 14" className="mt-[9px] ml-[14px] h-[14px] w-14" fill="none" stroke="#333" aria-hidden="true"><path d="M1 5q6-6 13 0M3.500 8q4-4 8 0M21 5h3l4-3v10M30 4q2 3 0 6M32 2q3 5 0 9M44 3h8v8h-8zM41 0v5M39 2.500h6" /></svg>
          <span className="ml-[38px] leading-[12px]">1:18</span>
        </div>
      </div>
    </footer>
  );
}

export default function App() {
  return (
    <div className="flex h-screen flex-col overflow-hidden bg-[#f4f4f4] font-['Liberation_Sans',Arial,sans-serif]">
      <Header />
      <div className="flex min-h-0 flex-1">
        <Rail />
        <Stencils />
        <Workspace />
        <FormatPanel />
      </div>
      <Taskbar />
    </div>
  );
}
